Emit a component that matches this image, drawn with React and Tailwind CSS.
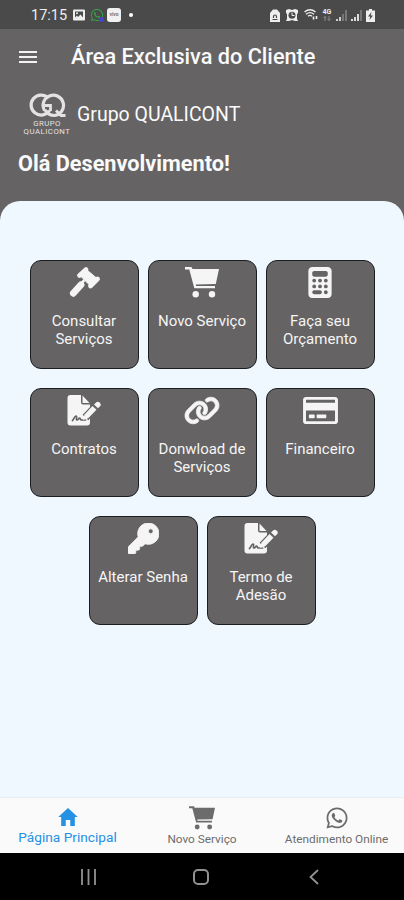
import { FaRegCreditCard } from 'react-icons/fa';
import { FaCalculator, FaKey, FaLink, FaWhatsapp } from 'react-icons/fa6';
import { IoMdHome } from 'react-icons/io';

const CartIcon = ({ className }) => (
  <svg viewBox="0 0 34 31" className={className} fill="currentColor">
    <path d="M0 0h6.500l1 2H34l-3.200 15-20 .6.400 1.400H30v2.300H9.300L4.300 2.600H0z" />
    <circle cx="10.700" cy="27.300" r="3.200" />
    <circle cx="27" cy="27.300" r="3.200" />
  </svg>
);

const GavelIcon = ({ className }) => (
  <svg viewBox="0 0 31 31" className={className} fill="currentColor" stroke="currentColor">
    <path d="M11 8.500L18 3l9.500 8-7 7z" />
    <path d="M10.500 8.500L17 2.500M21.500 19l7-7" strokeWidth="4.600" strokeLinecap="round" />
    <path d="M15.500 13L12 16.500" strokeWidth="2.500" />
    <path d="M12 17.800L4.300 26.300" strokeWidth="6.800" strokeLinecap="round" />
  </svg>
);

const SignatureIcon = ({ className }) => (
  <svg viewBox="0 0 35 31" className={className} fill="none">
    <path d="M3.500 0H14v7.500a2 2 0 0 0 2 2h7V27.500a3 3 0 0 1-3 3H3.500a3 3 0 0 1-3-3V3a3 3 0 0 1 3-3z" fill="currentColor" />
    <path d="M15.500 0.500L22.500 8h-7z" fill="currentColor" />
    <path d="M18.500 22.500L31 9.500" stroke="#656364" strokeWidth="8" />
    <path d="M5.500 25.500c1-.5 2-4.500 3.500-4.500s-.5 4 1 4 1.500-2 2.500-2 .5 2 2 2h4" stroke="#656364" strokeWidth="1.700" strokeLinecap="round" />
    <path d="M16 25l1.500-5.500 8-8.500 4 3.700-8.300 8.500z" fill="currentColor" />
    <path d="M27 9.500l1.800-1.800a2.800 2.800 0 0 1 4 0 2.700 2.700 0 0 1 0 3.900L31 13.300z" fill="currentColor" />
  </svg>
);

const ChainIcon = ({ className }) => (
  <FaLink className={className} stroke="currentColor" strokeWidth="14" />
);

const KeyIcon = ({ className }) => (
  <FaKey className={className} stroke="currentColor" strokeWidth="14" strokeLinejoin="round" />
);

const Logo = () => (
  <div className="flex w-12 flex-col items-center text-[#e4e2e3]">
    <svg viewBox="0 0 38 26" className="h-[26px] w-[38px]" fill="none" stroke="currentColor" strokeWidth="3.200">
      <path d="M21.500 17.500A10 10 0 1 1 20 4.800" />
      <path d="M16.500 17.500A10.200 10.200 0 1 1 26.500 22.500c-4 0-7.500-2-9.300-5.500" />
      <path d="M15.500 12.500h7v5.500M28 17.500l5 5h4.500" strokeWidth="2.800" />
    </svg>
    <span className="mt-[1px] text-[7.800px] leading-[8px] tracking-[0.4px]">GRUPO</span>
    <span className="whitespace-nowrap text-[7.800px] leading-[8px] tracking-[0.5px]">QUALICONT</span>
  </div>
);

const StatusBar = () => (
  <div className="flex h-[29px] shrink-0 items-center bg-[#4a4a4a] pl-[31px] pr-[29px] pt-px text-[#eeeeee]">
    <span className="mt-[2px] w-[37px] text-[14.500px] leading-none">17:15</span>
    <svg viewBox="0 0 12 12" className="ml-[5px] h-3 w-3">
      <rect y="0.500" width="12" height="11" rx="1" fill="currentColor" />
      <path d="M2 2.500h8v6L7.500 5.500 5 8 3.800 6.500 2 8.500z" fill="#4a4a4a" />
      <circle cx="4" cy="4.200" r="1" fill="currentColor" />
    </svg>
    <div className="relative ml-[5px] h-[14px] w-[14px] text-[#37a346]">
      <FaWhatsapp className="h-[14px] w-[14px]" />
      <span className="absolute bottom-0 right-0 h-[5px] w-[5px] rounded-full bg-[#4545cf]" />
    </div>
    <span className="ml-[3px] flex h-[14px] w-[14px] items-center justify-center rounded-[3px] bg-[#f1f1f1] text-[5px] font-bold text-[#777]">
      vivo
    </span>
    <span className="ml-[8px] h-1 w-1 rounded-full bg-white" />

    <div className="ml-auto flex items-center">
      <svg viewBox="0 0 10 13" className="h-[13px] w-[10px]">
        <path d="M3 0.500h4L10 4v9H0V4z" fill="currentColor" />
        <path d="M2.500 10.500h5M3.500 9V7.500a1.500 1.500 0 0 1 3 0V9" stroke="#4a4a4a" strokeWidth="1.200" fill="none" />
      </svg>
      <svg viewBox="0 0 12 12" className="ml-[6px] h-3 w-3">
        <path d="M0 1l3-1 3 1 3-1 3 1v3l-1 1v5l1 2H9l-3-1-3 1H0l1-2V5L0 4z" fill="currentColor" />
        <circle cx="6" cy="6.200" r="3.500" fill="#4a4a4a" />
        <path d="M6 3.500v3h2.500" stroke="currentColor" fill="none" />
      </svg>
      <svg viewBox="0 0 14 12" className="ml-[6px] h-3 w-[14px]" fill="none" stroke="currentColor">
        <path d="M0.500 3q5.500-4.500 11 0M2 5.200q4-3.200 8 0M4 7.200q2-1.600 4 0" strokeWidth="1.400" />
        <path d="M9.500 10.500v-3M12.500 7v3" strokeWidth="1.600" />
      </svg>
      <div className="ml-[4px] flex w-[10px] flex-col items-center">
        <span className="text-[7px] font-bold leading-[7px]">4G</span>
        <svg viewBox="0 0 8 5" className="h-[5px] w-2" stroke="#8b8b8b" fill="none">
          <path d="M2 5V0.500M0.500 2L2 0.500 3.500 2M6 0v4.500M4.500 3L6 4.500 7.500 3" />
        </svg>
      </div>
      <svg viewBox="0 0 11 11" className="ml-[4px] h-[11px] w-[11px]">
        <path d="M1 9v2M4 7v4" stroke="currentColor" strokeWidth="1.600" />
        <path d="M7 4v7M10 0v11" stroke="#777" strokeWidth="2" />
      </svg>
      <svg viewBox="0 0 11 11" className="ml-[4px] h-[11px] w-[11px]">
        <path d="M1 9v2M4 7v4M7 4v7" stroke="currentColor" strokeWidth="1.800" />
        <path d="M10 0v11" stroke="#777" strokeWidth="2" />
      </svg>
      <svg viewBox="0 0 9 13" className="ml-[4px] h-[13px] w-[9px]">
        <path d="M3 0h3v1.500h3V13H0V1.500h3z" fill="currentColor" />
        <path d="M5.500 3L2 7.500h2.200L3.500 11 7 6.500H4.800z" fill="#4a4a4a" />
      </svg>
    </div>
  </div>
);

const services = [
  { label: 'Consultar Serviços', icon: GavelIcon, size: 'h-[31px] w-[31px]' },
  { label: 'Novo Serviço', icon: CartIcon, size: 'h-[31px] w-[34px]' },
  { label: 'Faça seu Orçamento', icon: FaCalculator, size: 'h-[31px] w-[24px]' },
  { label: 'Contratos', icon: SignatureIcon, size: 'h-[31px] w-[35px]' },
  { label: 'Donwload de Serviços', icon: ChainIcon, size: 'h-[31px] w-[36px]' },
  { label: 'Financeiro', icon: FaRegCreditCard, size: 'h-[31px] w-[35px]' },
  { label: 'Alterar Senha', icon: KeyIcon, size: 'h-[31px] w-[31px]' },
  { label: 'Termo de Adesão', icon: SignatureIcon, size: 'h-[31px] w-[35px]' },
];

const ServiceCard = ({ label, icon: Icon, size }) => (
  <button className="flex h-[109px] w-[109px] flex-col items-center rounded-[11px] border-[1.500px] border-[#1c1d1f] bg-[#656364] pt-[6px] text-[#f5f5f5]">
    <Icon className={size} />
    <span className="mt-[15px] w-[100px] text-center text-[15px] leading-[17.500px]">{label}</span>
  </button>
);

const App = () => {
  return (
    <div className="flex h-[900px] w-[404px] flex-col overflow-hidden bg-[#656364] font-['Roboto',sans-serif]">
      <StatusBar />

      <header className="h-[172px] shrink-0 text-[#fafafa]">
        <div className="flex h-[55px] items-center pl-[19px]">
          <button className="flex w-[18px] flex-col gap-[3px]">
            <span className="h-[2px] bg-[#f3f3f3]" />
            <span className="h-[2px] bg-[#f3f3f3]" />
            <span className="h-[2px] bg-[#f3f3f3]" />
          </button>
          <h1 className="ml-[34px] text-[21.700px] font-medium leading-none">Área Exclusiva do Cliente</h1>
        </div>
        <div className="flex pl-[23px] pt-[9px]">
          <Logo />
          <p className="ml-[6px] mt-[10px] text-[19.500px] leading-[24px]">Grupo QUALICONT</p>
        </div>
        <h2 className="ml-[18px] mt-[15px] text-[21.700px] font-bold leading-[26px]">Olá Desenvolvimento!</h2>
      </header>

      <main className="flex flex-1 flex-wrap content-start justify-center gap-x-[9px] gap-y-[19px] rounded-t-[20px] bg-[#eff8ff] px-[29px] pt-[59px]">
        {services.map((item) => (
          <ServiceCard key={item.label} {...item} />
        ))}
      </main>

      <nav className="flex h-[56px] shrink-0 border-t border-[#e9edf2] bg-[#fafafa] text-[#6c6c6c]">
        <div className="flex w-[135px] flex-col items-center pt-[7px] text-[#2491e5]">
          <IoMdHome className="h-[24px] w-[24px]" />
          <span className="text-[13.700px] leading-[16px]">Página Principal</span>
        </div>
        <div className="flex w-[134px] flex-col items-center pt-[8px]">
          <CartIcon className="h-[24px] w-[26px]" />
          <span className="mt-px text-[11.800px] leading-[16px]">Novo Serviço</span>
        </div>
        <div className="flex w-[135px] flex-col items-center pt-[8px]">
          <FaWhatsapp className="h-[24px] w-[24px]" />
          <span className="mt-px text-[11.800px] leading-[16px]">Atendimento Online</span>
        </div>
      </nav>

      <div className="flex h-[47px] shrink-0 items-center bg-black pl-[81px] text-[#929292]">
        <svg viewBox="0 0 15 16" className="h-4 w-[15px]" stroke="currentColor" strokeWidth="1.800">
          <path d="M1 0v16M7.500 0v16M14 0v16" />
        </svg>
        <span className="ml-[97px] h-4 w-4 rounded-[5px] border-2 border-[#929292]" />
        <svg viewBox="0 0 10 16" className="ml-[100px] h-4 w-[10px]" fill="none" stroke="currentColor" strokeWidth="1.800">
          <path d="M9 1L1.500 8 9 15" />
        </svg>
      </div>
    </div>
  );
};

export default App;
